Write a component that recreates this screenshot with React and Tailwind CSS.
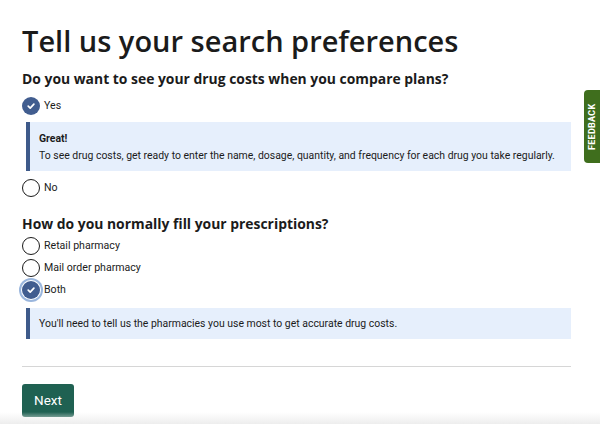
import React from "react";

function Radio({ checked, focus, label }) {
  return (
    <label className="flex items-center gap-[4px] h-[22px]">
      {checked ? (
        <span className={"flex items-center justify-center w-[18px] h-[18px] rounded-full bg-[#415d8f] " + (focus ? "ring-2 ring-[#9ab6dd] ring-offset-1" : "")}>
          <svg width="10" height="10" viewBox="0 0 10 10">
            <path d="M2.2 5.2 L4.2 7.1 L7.9 3.1" fill="none" stroke="white" strokeWidth="1.7" strokeLinecap="round" strokeLinejoin="round" />
          </svg>
        </span>
      ) : (
        <span className="w-[18px] h-[18px] rounded-full border-[1.5px] border-[#1b1b1b] bg-white" />
      )}
      <span className="text-[10.6px] text-[#1b1b1b]">{label}</span>
    </label>
  );
}

export default function App() {
  return (
    <div className="relative w-[600px] h-[424px] overflow-hidden bg-white" style={{ fontFamily: "Roboto, 'Open Sans', sans-serif" }}>
      <div className="pl-[22px] pr-[29px] pt-[22px]">
        <h1 className="text-[29px] leading-[38px] font-semibold text-[#1b1b1b]" style={{ fontFamily: "'Open Sans', sans-serif" }}>
          Tell us your search preferences
        </h1>
        <h2 className="mt-[9px] text-[13.9px] leading-[20px] font-bold text-[#1b1b1b]" style={{ fontFamily: "'Open Sans', sans-serif" }}>
          Do you want to see your drug costs when you compare plans?
        </h2>
        <div className="mt-[6px]">
          <Radio checked label="Yes" />
        </div>
        <div className="mt-[5px] ml-[4px] border-l-4 border-[#3e5a8a] bg-[#e6effc] pl-[9px] pt-[10px] pb-[8px] text-[10.45px] text-[#1b1b1b]">
          <div className="font-bold leading-[14px]">Great!</div>
          <div className="mt-[3px] leading-[14px] whitespace-nowrap">To see drug costs, get ready to enter the name, dosage, quantity, and frequency for each drug you take regularly.</div>
        </div>
        <div className="mt-[6px]">
          <Radio label="No" />
        </div>
        <h2 className="mt-[15px] text-[13.9px] leading-[20px] font-bold text-[#1b1b1b]" style={{ fontFamily: "'Open Sans', sans-serif" }}>
          How do you normally fill your prescriptions?
        </h2>
        <div className="mt-[1px] flex flex-col">
          <Radio label="Retail pharmacy" />
          <Radio label="Mail order pharmacy" />
          <Radio checked focus label="Both" />
        </div>
        <div className="mt-[7px] ml-[4px] h-[31px] flex items-center border-l-4 border-[#3e5a8a] bg-[#e6effc] pl-[9px] text-[10.45px] leading-[14px] text-[#1b1b1b]">
          You'll need to tell us the pharmacies you use most to get accurate drug costs.
        </div>
        <hr className="mt-[27px] border-t border-[#d6d6d6]" />
        <button className="mt-[17px] w-[52px] h-[33px] rounded-[3px] bg-[#1f6152] text-white text-[13.5px]">Next</button>
      </div>
      <div className="absolute left-0 right-0 bottom-0 h-[12px] bg-gradient-to-b from-transparent to-[#ededed]" />
      <div className="absolute right-0 top-[90px] w-[16px] h-[73px] rounded-l-[4px] bg-[#3f6e1d] flex items-center justify-center">
        <span className="-rotate-90 whitespace-nowrap text-white text-[9px] font-bold tracking-[0.3px]">FEEDBACK</span>
      </div>
    </div>
  );
}
